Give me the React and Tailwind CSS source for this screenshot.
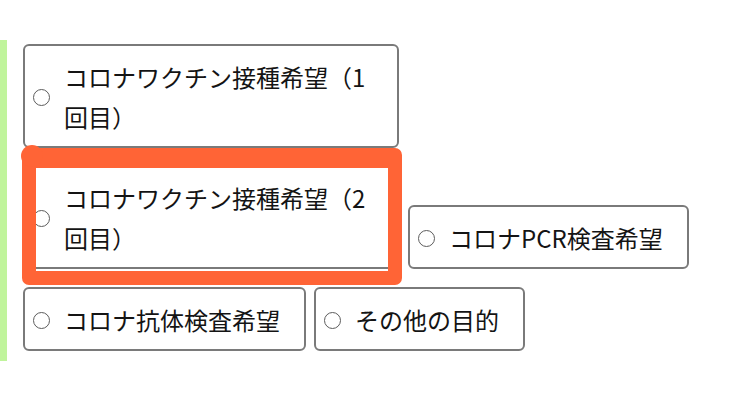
const options = [
  { id: "v1", label: "コロナワクチン接種希望（1回目）", wide: true },
  { id: "v2", label: "コロナワクチン接種希望（2回目）", wide: true },
  { id: "pcr", label: "コロナPCR検査希望" },
  { id: "ab", label: "コロナ抗体検査希望" },
  { id: "other", label: "その他の目的" },
];

function Option({ option }) {
  return (
    <label
      className={
        "flex items-center gap-[14px] rounded-[6px] border-2 border-[#7a7a7a] bg-white pl-[8px] pr-[24px] pt-[11px] pb-[9px] " +
        (option.wide ? "w-[376px]" : "")
      }
    >
      <span className="h-[17px] w-[17px] shrink-0 rounded-full border-[1.5px] border-[#5c5c5c] bg-white" />
      <span className="min-w-0 text-[24px] leading-[40px] text-[#141414]">{option.label}</span>
    </label>
  );
}

export default function App() {
  const [v1, v2, pcr, ab, other] = options;
  return (
    <div
      className="min-h-[413px] bg-white pt-[40px]"
      style={{ fontFamily: '"Noto Sans CJK JP", "Noto Sans", sans-serif' }}
    >
      <div className="relative border-l-[7px] border-[#c0f49c] pl-[16px] pt-[4px] pb-[10px]">
        <div className="flex">
          <Option option={v1} />
        </div>
        <div className="mt-[17px] flex items-end gap-[9px]">
          <Option option={v2} />
          <Option option={pcr} />
        </div>
        <div className="mt-[18px] flex gap-[8px]">
          <Option option={ab} />
          <Option option={other} />
        </div>

        {/* hand-drawn highlight over the 2nd option */}
        <div className="pointer-events-none absolute left-[15px] top-[108px] h-[137px] w-[380px] rounded-[7px] border-[14px] border-t-[20px] border-[#ff6436]" />
        <div className="pointer-events-none absolute left-[14px] top-[105px] h-[22px] w-[22px] rounded-full bg-[#ff6436]" />
      </div>
    </div>
  );
}
